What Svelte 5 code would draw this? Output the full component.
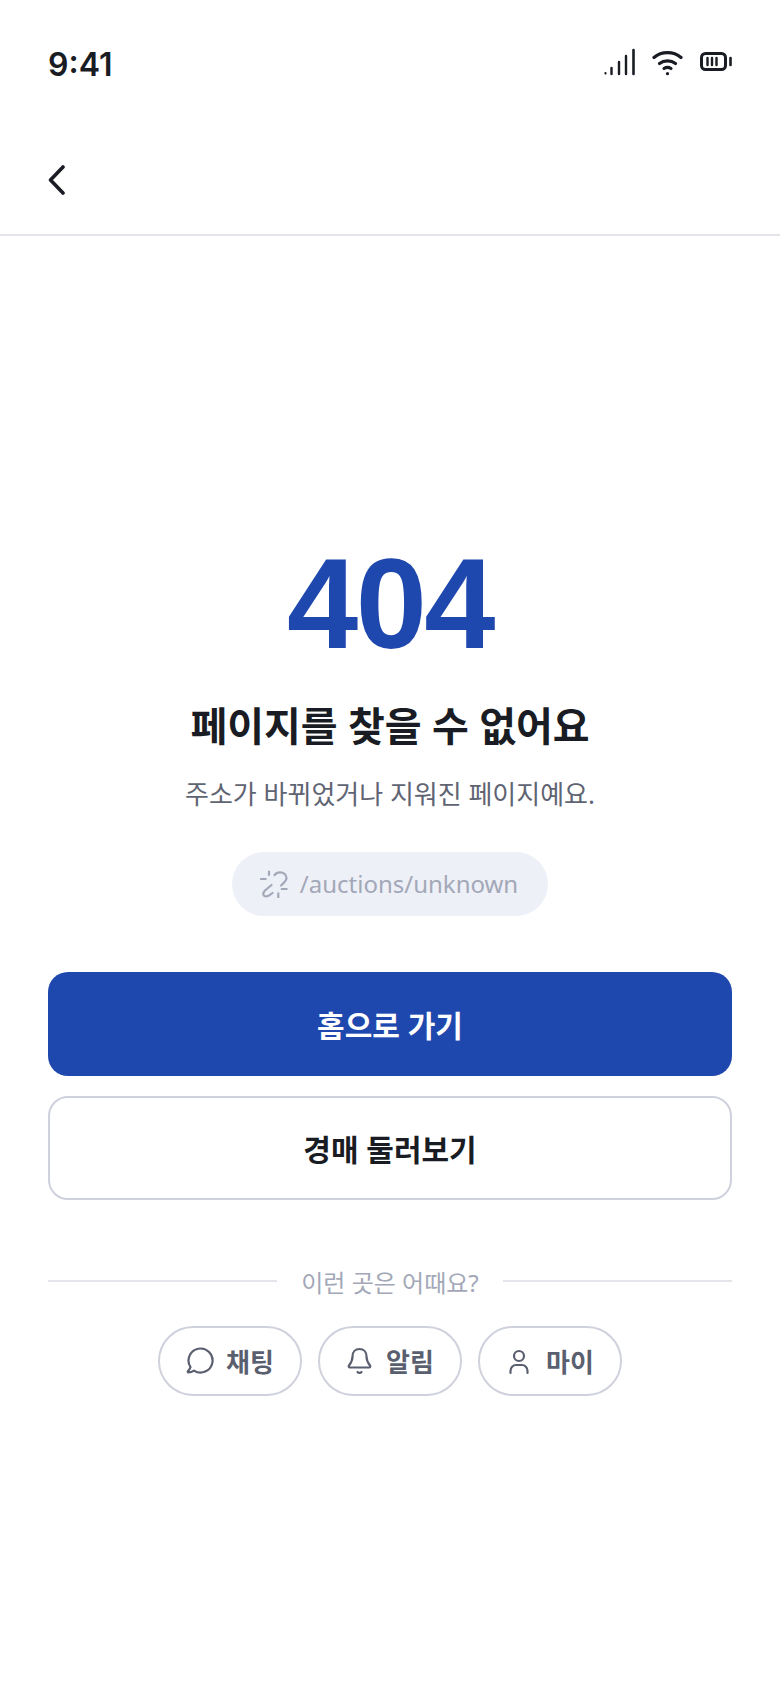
<script lang="ts">
  const links = [
    { label: '채팅', icon: 'chat' },
    { label: '알림', icon: 'bell' },
    { label: '마이', icon: 'user' }
  ];
</script>

<div class="page">
  <div class="status">
    <span class="time">9:41</span>
    <div class="status-icons">
      <svg class="signal" width="32" height="28" viewBox="0 0 32 28" fill="none" stroke="#1a1c24" stroke-linecap="round">
        <path d="M1.500 25v.4" stroke-width="2.2" />
        <path d="M7.500 20v6M15 14v12M22 8v18" stroke-width="2.4" />
        <path d="M29.500 2v24" stroke-width="2.6" />
      </svg>
      <svg width="34" height="28" viewBox="0 0 34 28" fill="none" stroke="#1a1c24" stroke-width="3.2" stroke-linecap="round">
        <path d="M2 9.500C9.500 3 21.500 3 29 9.500" />
        <path d="M7.500 15.500C12 12 19 12 23.500 15.500" />
        <path d="M12 20.500C14 19.200 17 19.200 19 20.500" />
        <path d="M15.500 25.500v.2" />
      </svg>
      <svg width="32" height="24" viewBox="0 0 32 24" fill="none" stroke="#1a1c24" stroke-linecap="round">
        <rect x="1.500" y="3.500" width="24" height="16" rx="4" stroke-width="3" />
        <path d="M7.500 8v7M12 8v7M16.500 8v7" stroke-width="2.400" />
        <path d="M30.500 8v7" stroke-width="2.600" />
      </svg>
    </div>
  </div>

  <header class="topbar">
    <button class="back" aria-label="뒤로">
      <svg width="20" height="32" viewBox="0 0 20 32" fill="none" stroke="#1a1c24" stroke-width="3.600" stroke-linecap="round" stroke-linejoin="round">
        <path d="M15 2 L2.500 15 L15 28" />
      </svg>
    </button>
  </header>

  <main class="content">
    <div class="code">404</div>
    <h1>페이지를 찾을 수 없어요</h1>
    <p class="desc">주소가 바뀌었거나 지워진 페이지예요.</p>

    <div class="path">
      <svg width="28" height="28" viewBox="0 0 28 28" fill="none" stroke="#a3a8b8" stroke-width="2.200" stroke-linecap="round" stroke-linejoin="round">
        <path d="M14.500 5C16 3 18 2.300 20 2.300C24 2.300 26.500 5 26.500 8C26.500 10 25 12 21 15.500" />
        <path d="M11.500 15L5 20.500C2.500 23 3 25.500 4.500 26C6.500 27 9 26 12.500 23" />
        <path d="M9 1.700V5M1 9H5.700M21.700 19H26.700M18.300 23.300V27.300" />
      </svg>
      <span>/auctions/unknown</span>
    </div>

    <div class="actions">
      <button class="btn primary">홈으로 가기</button>
      <button class="btn outline">경매 둘러보기</button>
    </div>

    <div class="divider"><span>이런 곳은 어때요?</span></div>

    <div class="pills">
      {#each links as link}
        <button class="pill">
          <svg width="28" height="28" viewBox="0 0 28 28" fill="none" stroke="#5a5f70" stroke-width="2.200" stroke-linecap="round" stroke-linejoin="round">
            {#if link.icon === 'chat'}
              <path d="M4.500 20.100A12 12 0 1 1 8 23.600C6 25 3.500 25.500 2.500 25.500C1.500 25.500 1.500 24.500 2.200 24C3 23 4 21.500 4.500 20.100Z" />
            {:else if link.icon === 'bell'}
              <path d="M6.500 9.500C6.500 5 9.500 2 13.500 2C17.500 2 20.500 5 20.500 9.500C20.500 14 22 16 24 18.500C24.700 19.500 24.200 20.500 23 20.500H4C2.800 20.500 2.300 19.500 3 18.500C5 16 6.500 14 6.500 9.500Z" />
              <path d="M11.500 25C12.500 26.200 14.500 26.200 15.500 25" />
            {:else}
              <circle cx="13" cy="9" r="5" />
              <path d="M4.500 26V24C4.500 20.500 7 18 10 18H16C19 18 21.500 20.500 21.500 24V26" />
            {/if}
          </svg>
          <span>{link.label}</span>
        </button>
      {/each}
    </div>
  </main>
</div>

<style>
  :global(body) {
    margin: 0;
    background: #fff;
  }

  .page {
    display: flex;
    flex-direction: column;
    height: 1688px;
    font-family: "Noto Sans", "Noto Sans CJK KR", sans-serif;
    color: #1a1c24;
  }

  .status {
    display: flex;
    justify-content: space-between;
    align-items: center;
    height: 128px;
    padding: 0 48px;
    box-sizing: border-box;
  }

  .time {
    font-family: Inter, sans-serif;
    font-weight: 600;
    font-size: 32px;
  }

  .status-icons {
    display: flex;
    align-items: center;
    gap: 14px;
    margin-bottom: 4px;
  }

  .signal {
    margin-right: 2px;
  }

  .topbar {
    display: flex;
    align-items: center;
    height: 108px;
    padding: 0 48px;
    box-sizing: border-box;
    border-bottom: 2px solid #e4e5ea;
  }

  .back {
    display: flex;
    padding: 0;
    border: 0;
    background: none;
  }

  .content {
    flex: 1;
    display: flex;
    flex-direction: column;
    align-items: center;
    justify-content: center;
    padding: 11px 48px 0;
  }

  .code {
    font-family: "Liberation Sans", Arial, sans-serif;
    font-weight: 700;
    font-size: 128px;
    line-height: 1;
    letter-spacing: -2.560px;
    color: #1f48ae;
  }

  h1 {
    margin: 30px 0 0;
    font-size: 40px;
    line-height: 56px;
    font-weight: 700;
  }

  .desc {
    margin: 20px 0 0;
    font-size: 26px;
    line-height: 40px;
    color: #5f6473;
  }

  .path {
    display: flex;
    align-items: center;
    gap: 12px;
    height: 64px;
    margin-top: 38px;
    padding: 0 30px 0 28px;
    border-radius: 32px;
    background: #eef0f7;
    font-size: 24px;
    color: #a3a8b8;
  }

  .actions {
    display: flex;
    flex-direction: column;
    gap: 20px;
    width: 100%;
    margin-top: 56px;
  }

  .btn {
    height: 104px;
    border-radius: 20px;
    font-family: inherit;
    font-size: 30px;
    font-weight: 700;
  }

  .primary {
    border: 0;
    background: #1f48ae;
    color: #fff;
  }

  .outline {
    border: 2px solid #cfd1dc;
    background: #fff;
    color: #1a1c24;
  }

  .divider {
    display: flex;
    align-items: center;
    gap: 24px;
    width: 100%;
    margin-top: 64px;
    font-size: 24px;
    color: #a3a8b8;
  }

  .divider::before,
  .divider::after {
    content: "";
    flex: 1;
    height: 2px;
    background: #e4e5ea;
  }

  .pills {
    display: flex;
    gap: 16px;
    margin-top: 27px;
  }

  .pill {
    display: flex;
    align-items: center;
    justify-content: center;
    gap: 12px;
    width: 144px;
    height: 70px;
    padding: 0;
    border: 2px solid #cfd1dc;
    border-radius: 35px;
    background: #fff;
    font-family: inherit;
    font-size: 26px;
    font-weight: 700;
    color: #5a5f70;
  }
</style>
